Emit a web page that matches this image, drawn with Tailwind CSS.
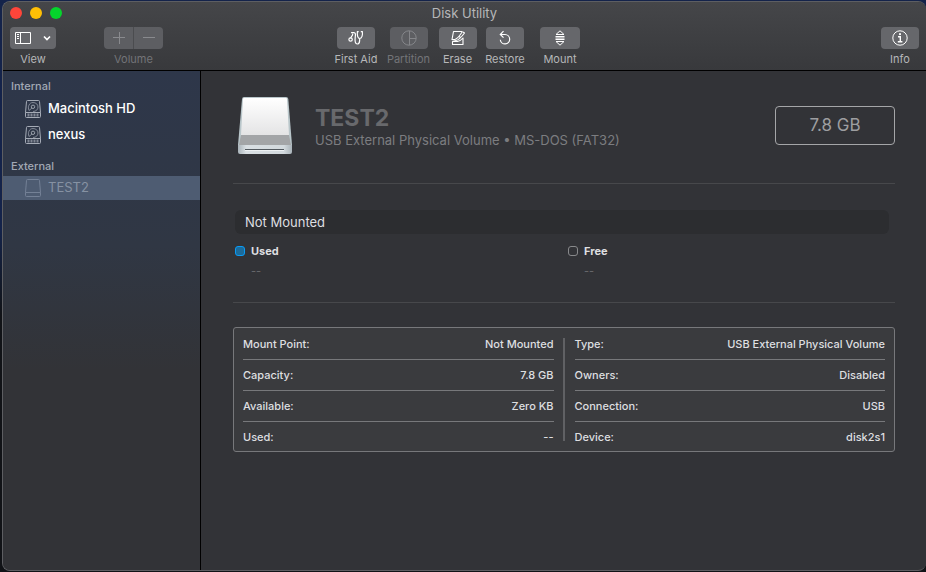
<!DOCTYPE html>
<html lang="en">
<head>
<meta charset="utf-8">
<meta name="viewport" content="width=device-width, initial-scale=1">
<title>Disk Utility</title>
<script src="https://cdn.jsdelivr.net/npm/@tailwindcss/browser@4"></script>
</head>
<body class="min-h-screen bg-linear-to-b from-[#14234a] from-40% to-[#111317] to-55% pl-[2px] pt-px pb-px font-['Inter','Liberation_Sans',sans-serif]">
<div class="flex min-h-[calc(100vh-2px)] flex-col overflow-hidden rounded-lg border border-r-0 border-[#5d5e62] bg-[#323337]">
  <header class="border-b border-black bg-linear-to-b from-[#454649] to-[#38393c] text-[#b6b7b9]">
    <div class="relative flex h-[21px] items-center px-[7px]">
      <div class="flex gap-2">
        <button aria-label="Close" class="size-3 rounded-full bg-[#ff453a]"></button>
        <button aria-label="Minimize" class="size-3 rounded-full bg-[#ffbf05]"></button>
        <button aria-label="Zoom" class="size-3 rounded-full bg-[#05d52c]"></button>
      </div>
      <h1 class="pointer-events-none absolute inset-x-0 text-center text-[13px] leading-5">Disk Utility</h1>
    </div>
    <nav class="flex h-[47px] items-start px-[7px] pt-1 text-[11px] leading-5" aria-label="Toolbar">
      <div class="flex w-[46px] flex-col items-center">
        <button aria-labelledby="view" class="flex h-[22px] w-full items-center justify-between rounded bg-[#66676b] px-[5px] text-white">
          <svg class="h-3 w-4" viewBox="0 0 16 12" fill="none" stroke="currentColor"><path d="M.5.5h15v11H.5zM5.5.5v11M2 2.500h2M2 4.500h2M2 6.500h2"/></svg>
          <svg class="h-2 w-2" viewBox="0 0 8 8" fill="none" stroke="currentColor" stroke-width="1.700"><path d="m1 2.500 3 3 3-3"/></svg>
        </button>
        <span id="view">View</span>
      </div>
      <div class="ml-12 flex w-[59px] flex-col items-center text-[#737478]">
        <div class="flex h-[22px] w-full overflow-hidden rounded bg-[#5d5e62] text-[#898a8e]">
          <button aria-label="Add volume" class="flex flex-1 items-center justify-center border-r border-[#4b4c4f]"><svg class="size-3" viewBox="0 0 12 12" stroke="currentColor"><path d="M0 5.500h12M6.500 0v12"/></svg></button>
          <button aria-label="Remove volume" class="flex flex-1 items-center justify-center"><svg class="size-3" viewBox="0 0 12 12" stroke="currentColor"><path d="M0 5.500h12"/></svg></button>
        </div>
        <span>Volume</span>
      </div>
      <div class="ml-[166px] flex w-[54px] flex-col items-center whitespace-nowrap">
        <button aria-labelledby="aid" class="flex h-[22px] w-[38px] items-center justify-center rounded bg-[#66676b] text-white">
          <svg class="h-4 w-4" viewBox="0 0 16 16" fill="none" stroke="currentColor" stroke-width="1.200" stroke-linecap="round"><circle cx="2.600" cy="9.500" r="1.700"/><path d="M2.800 7.800C3 6.500 4.700 6 4.700 4.200M3.500 2.700h2.400c2 0 1.600 2 1.300 4.800-.4 3.500 0 6.500 2 6.500 2.500 0 2.500-2.200 2.500-5.300M10.200 1.700H9.400C9 5 9.700 8.500 11.700 8.500S15 5 14.300 1.700h-1"/></svg>
        </button>
        <span id="aid">First Aid</span>
      </div>
      <div class="flex w-[51px] flex-col items-center text-[#737478]">
        <button aria-labelledby="part" class="flex h-[22px] w-[38px] items-center justify-center rounded bg-[#5d5e62] text-[#85868a]" disabled>
          <svg class="size-4" viewBox="0 0 16 16" fill="none" stroke="currentColor"><circle cx="8" cy="8" r="7.200"/><path d="M8.500 1v14M8.500 8.500h6.500"/></svg>
        </button>
        <span id="part">Partition</span>
      </div>
      <div class="flex w-[47px] flex-col items-center">
        <button aria-labelledby="erase" class="flex h-[22px] w-[38px] items-center justify-center rounded bg-[#66676b] text-white">
          <svg class="size-4" viewBox="0 0 16 16" fill="none" stroke="currentColor" stroke-width="1.100" stroke-linejoin="round"><path d="M12.500 1.500h-9L2 9.500c3 .8 5.500-1 8-4.500l2.500-3.500M2 9.500l4 1c3-.5 5.500-3.500 8.500-7.500L13 2M9 6.500l2 1.200M2.500 14.500v-3h5c2.500-.2 4-1.800 5.500-3.500v6.500z"/></svg>
        </button>
        <span id="erase">Erase</span>
      </div>
      <div class="flex w-12 flex-col items-center">
        <button aria-labelledby="restore" class="flex h-[22px] w-[38px] items-center justify-center rounded bg-[#66676b] text-white">
          <svg class="size-4" viewBox="0 0 16 16" fill="none" stroke="currentColor" stroke-width="1.200"><path d="M3.500 4.500H8a4.700 4.700 0 1 1-4.700 5.200M6.500 1.200 3.300 4.500l3.200 3.200"/></svg>
        </button>
        <span id="restore">Restore</span>
      </div>
      <div class="ml-[11px] flex w-10 flex-col items-center">
        <button aria-labelledby="mount" class="flex h-[22px] w-full items-center justify-center rounded bg-[#66676b] text-white">
          <svg class="size-4" viewBox="0 0 16 16" fill="none" stroke="currentColor"><path d="M4 4.500 8 .8l4 3.700zM4 11.500l4 3.700 4-3.700zM3.500 6.500h9M3.500 8h9M3.500 9.500h9"/></svg>
        </button>
        <span id="mount">Mount</span>
      </div>
      <div class="ml-auto flex w-[38px] flex-col items-center">
        <button aria-labelledby="info" class="flex h-[22px] w-full items-center justify-center rounded bg-[#66676b] text-white">
          <svg class="size-4" viewBox="0 0 16 16" fill="none" stroke="currentColor"><circle cx="8" cy="8" r="7.200"/><path d="M6 6.700h2.300v5M5.800 11.700h4.600" stroke-width="1.400"/><circle cx="8" cy="4.200" r="1.100" fill="currentColor" stroke="none"/></svg>
        </button>
        <span id="info">Info</span>
      </div>
    </nav>
  </header>
  <div class="flex flex-1">
    <aside class="w-[198px] shrink-0 border-r border-black bg-linear-to-b from-[#2e374a] from-0% via-[#303744] via-35% to-[#323337] to-60% pt-[5px] text-[13px] font-medium text-white">
      <h2 class="px-2 text-[11px] leading-5 text-[#a2a9b5]">Internal</h2>
      <ul>
        <li><a href="#mac" class="flex h-[26px] items-center gap-[7px] pl-[22px]">
          <svg class="h-[18px] w-4 text-[#a5abb6]" viewBox="0 0 16 18" fill="none" stroke="currentColor"><path d="M2.500.5h11q1 0 1 1l1 11v4q0 1-1 1h-13q-1 0-1-1v-4l1-11q0-1 1-1zM.5 12.500h15"/><path d="M2.500 15h11" stroke-width="3" stroke-dasharray="2 1" opacity=".7"/><path d="M4 10.500C2.500 7 4 2.500 8 2.500c3 0 5 2 5 4.500s-2 4.500-5 4.500M4 10.500 7 8" stroke-width=".7"/><circle cx="8" cy="6.800" r="1.700" stroke-width=".9"/></svg>Macintosh HD</a></li>
        <li><a href="#nexus" class="flex h-[26px] items-center gap-[7px] pl-[22px]">
          <svg class="h-[18px] w-4 text-[#a5abb6]" viewBox="0 0 16 18" fill="none" stroke="currentColor"><path d="M2.500.5h11q1 0 1 1l1 11v4q0 1-1 1h-13q-1 0-1-1v-4l1-11q0-1 1-1zM.5 12.500h15"/><path d="M2.500 15h11" stroke-width="3" stroke-dasharray="2 1" opacity=".7"/><path d="M4 10.500C2.500 7 4 2.500 8 2.500c3 0 5 2 5 4.500s-2 4.500-5 4.500M4 10.500 7 8" stroke-width=".7"/><circle cx="8" cy="6.800" r="1.700" stroke-width=".9"/></svg>nexus</a></li>
      </ul>
      <h2 class="mt-2 px-2 text-[11px] leading-5 text-[#a2a9b5]">External</h2>
      <a href="#test2" aria-current="page" class="flex h-6 items-center gap-[7px] bg-[#4e5c72] pl-[22px] font-normal text-[#8692a3]">
        <svg class="h-[18px] w-4 text-[#748196]" viewBox="0 0 16 18" fill="none" stroke="currentColor"><path d="M2.500.5h11q1 0 1 1l1 12v3q0 1-1 1h-13q-1 0-1-1v-3l1-12q0-1 1-1zM.5 13.500h15"/></svg>TEST2</a>
    </aside>
    <main class="min-w-0 flex-1 pt-[25px] pr-[31px] pl-8 text-[#dedfe0]">
      <section class="flex h-[60px]">
        <svg class="ml-[5px] h-[60px] w-[54px] shrink-0" viewBox="0 0 54 60" role="img" aria-label="USB drive">
          <defs>
            <linearGradient id="top" x2="0" y2="1"><stop stop-color="#fff"/><stop offset="1" stop-color="#e4e4e5"/></linearGradient>
            <linearGradient id="front"><stop stop-color="#a9b3b9"/><stop offset=".15" stop-color="#d9dfe3"/><stop offset=".85" stop-color="#d2d9dd"/><stop offset="1" stop-color="#a9b3b9"/></linearGradient>
          </defs>
          <path d="M6 1h42q2 0 2.300 2L54 49H0L4 3q.3-2 2-2" fill="#b9c6ca"/>
          <path d="M6 2h42q1 0 1 1l2 36H3L5 3q0-1 1-1" fill="url(#top)"/>
          <path d="M3 39h48l2 10H1z" fill="#a3a5a7"/>
          <path d="M0 49h54v7q0 2-2 2H2q-2 0-2-2z" fill="url(#front)"/>
          <path d="M7 53.500h39" stroke="#52595f"/><path d="M7 54.500h39" stroke="#edf1f3"/>
        </svg>
        <div class="ml-[23px] flex min-w-0 flex-1 flex-col pt-2">
          <h2 class="text-[23px] leading-7 font-bold text-[#68696c]">TEST2</h2>
          <p class="text-[13px] leading-4 text-[#7c7d80]">USB External Physical Volume • MS-DOS (FAT32)</p>
        </div>
        <div class="mt-[10px] flex h-[39px] w-[120px] items-center justify-center rounded border border-[#a5a6a8] text-[17px] text-[#9d9ea0]">7.8 GB</div>
      </section>
      <hr class="mt-[27px] border-[#47484b]">
      <div class="mt-[26px] mr-[6px] ml-[2px] h-6 rounded-md bg-[#2c2d30] px-[10px] text-[13px] leading-6">Not Mounted</div>
      <dl class="mt-[7px] ml-[2px] grid h-[61px] grid-cols-2 gap-x-[6px] text-[11px] leading-5">
        <div><dt class="flex items-center gap-[6px] font-bold"><span class="size-[10px] rounded-[3px] border border-[#0a9bf5] bg-[#1c6b9a]"></span>Used</dt><dd class="pl-4 text-[#68696c]">--</dd></div>
        <div><dt class="flex items-center gap-[6px] font-bold"><span class="size-[10px] rounded-[3px] border border-[#88898b]"></span>Free</dt><dd class="pl-4 text-[#68696c]">--</dd></div>
      </dl>
      <hr class="border-[#47484b]">
      <section class="mt-[24px] flex rounded-[3px] border border-[#77787b] bg-[#3a3b3e] px-[9px] text-[11px] font-medium" aria-label="Volume details">
        <table class="flex-1 table-fixed"><tbody class="divide-y divide-[#77787b]">
          <tr class="h-[31px]"><th scope="row" class="w-1/3 pt-[2px] text-left font-medium">Mount Point:</th><td class="pt-[2px] text-right">Not Mounted</td></tr>
          <tr class="h-[31px]"><th scope="row" class="pt-[2px] text-left font-medium">Capacity:</th><td class="pt-[2px] text-right">7.8 GB</td></tr>
          <tr class="h-[31px]"><th scope="row" class="pt-[2px] text-left font-medium">Available:</th><td class="pt-[2px] text-right">Zero KB</td></tr>
          <tr class="h-[30px]"><th scope="row" class="pt-[2px] text-left font-medium">Used:</th><td class="pt-[2px] text-right">--</td></tr>
        </tbody></table>
        <div class="mr-[10px] ml-[9px] my-[10px] w-[2px] bg-[#606164]"></div>
        <table class="flex-1 table-fixed"><tbody class="divide-y divide-[#77787b]">
          <tr class="h-[31px]"><th scope="row" class="w-1/3 pt-[2px] text-left font-medium">Type:</th><td class="pt-[2px] text-right">USB External Physical Volume</td></tr>
          <tr class="h-[31px]"><th scope="row" class="pt-[2px] text-left font-medium">Owners:</th><td class="pt-[2px] text-right">Disabled</td></tr>
          <tr class="h-[31px]"><th scope="row" class="pt-[2px] text-left font-medium">Connection:</th><td class="pt-[2px] text-right">USB</td></tr>
          <tr class="h-[30px]"><th scope="row" class="pt-[2px] text-left font-medium">Device:</th><td class="pt-[2px] text-right">disk2s1</td></tr>
        </tbody></table>
      </section>
    </main>
  </div>
</div>
</body>
</html>
